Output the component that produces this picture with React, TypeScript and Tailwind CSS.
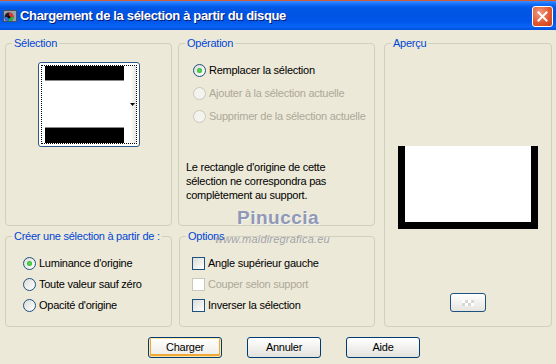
import React from "react";

function Radio({ label, checked, disabled }: { label: string; checked?: boolean; disabled?: boolean }) {
  return (
    <div className="flex h-[21px] items-center gap-[3px] whitespace-nowrap">
      <span
        className={
          disabled
            ? "flex h-[13px] w-[13px] shrink-0 items-center justify-center rounded-full border border-[#cac8bb] bg-[#f4f3ee]"
            : "flex h-[13px] w-[13px] shrink-0 items-center justify-center rounded-full border border-[#1c5180] bg-gradient-to-br from-[#dcdcd7] to-white"
        }
      >
        {checked && <span className="h-[5px] w-[5px] rounded-full bg-[radial-gradient(circle,#5be35b,#21a121)]" />}
      </span>
      <span className={disabled ? "text-[#aca899]" : "text-black"}>{label}</span>
    </div>
  );
}

function Check({ label, disabled }: { label: string; disabled?: boolean }) {
  return (
    <div className="flex h-[21px] items-center gap-[3px] whitespace-nowrap">
      <span
        className={
          disabled
            ? "h-[13px] w-[13px] shrink-0 border border-[#cac8bb] bg-white"
            : "h-[13px] w-[13px] shrink-0 border border-[#1c5180] bg-gradient-to-br from-[#dcdcd7] to-white"
        }
      />
      <span className={disabled ? "text-[#aca899]" : "text-black"}>{label}</span>
    </div>
  );
}

function Group({ title, className, children }: { title: string; className?: string; children?: React.ReactNode }) {
  return (
    <fieldset className={"min-w-0 rounded-[4px] border border-[#d0d0bf] " + (className ?? "")}>
      <legend className="ml-[6px] px-[2px] leading-[13px] text-[#0046d5]">{title}</legend>
      {children}
    </fieldset>
  );
}

function Btn({ label, main }: { label: string; main?: boolean }) {
  return (
    <button
      className={
        main
          ? "h-[21px] w-[74px] rounded-[3px] border border-[#003c74] bg-gradient-to-b from-white to-[#ecebe6] shadow-[inset_0_0_0_1px_#ffe7a2,inset_0_-1px_0_2px_#f0a73a]"
          : "h-[21px] w-[74px] rounded-[3px] border border-[#003c74] bg-gradient-to-b from-white to-[#e3e2dc]"
      }
    >
      {label}
    </button>
  );
}

export default function App() {
  return (
    <div className="relative h-[364px] w-[556px] overflow-hidden bg-[#ece9d8] font-['Liberation_Sans',Arial,sans-serif] text-[11px] tracking-[-0.25px] text-black">
      {/* title bar */}
      <div className="flex h-[30px] items-center border-t border-[#cf5b3b] bg-[linear-gradient(to_bottom,#3a8cff_0%,#1470fb_10%,#0058e6_22%,#0054e3_45%,#0057ea_70%,#0863f6_88%,#0050dc_100%)] pl-[2px] pr-[3px]">
        <svg width="16" height="16" viewBox="0 0 16 16" className="mt-[1px]">
          <rect x="1" y="2" width="14" height="12" rx="1" fill="#4a4f59" />
          <rect x="2" y="3" width="12" height="10" fill="#9aa3ad" />
          <circle cx="7" cy="9" r="4.5" fill="#1d1d25" />
          <path d="M7 4.5a4.5 4.5 0 0 1 4.5 4.5H7z" fill="#e6342c" />
          <path d="M11.5 9A4.5 4.5 0 0 1 7 13.5V9z" fill="#28b33e" />
          <path d="M7 13.5A4.5 4.5 0 0 1 2.5 9H7z" fill="#2f6de0" />
          <circle cx="7" cy="9" r="1.6" fill="#111" />
        </svg>
        <div className="ml-[2px] text-[13px] font-bold tracking-[-0.35px] text-white [text-shadow:1px_1px_0_#0a1c6c]">
          Chargement de la sélection à partir du disque
        </div>
        <div className="ml-auto mt-[2px] flex h-[21px] w-[21px] items-center justify-center rounded-[3px] border border-white bg-[radial-gradient(circle_at_35%_30%,#f29b80,#e0552c_60%,#c8421b)]">
          <svg width="11" height="11" viewBox="0 0 11 11">
            <path d="M1.5 1.5l8 8M9.5 1.5l-8 8" stroke="white" strokeWidth="2" strokeLinecap="square" />
          </svg>
        </div>
      </div>

      {/* body */}
      <div className="px-[5px] pt-[7px]">
        <div className="grid grid-cols-[167px_197px_171px] grid-rows-[189px_97px] gap-x-[6px] gap-y-[4px]">
          <Group title="Sélection" className="flex flex-col items-center">
            <div className="mt-[12px] h-[85px] w-[102px] rounded-[3px] border border-[#2b5a8a] bg-white p-[2px]">
              <div className="flex h-full border border-dotted border-black">
                <div className="ml-[3px] flex w-[79px] flex-col">
                  <div className="h-[15px] border-b border-[#8a8a8a] bg-black" />
                  <div className="flex-1" />
                  <div className="h-[16px] border-t border-[#8a8a8a] bg-black" />
                </div>
                <div className="flex flex-1 items-center justify-end bg-gradient-to-r from-white via-white to-[#e6e5e0] pr-[1px]">
                  <svg width="5" height="3" viewBox="0 0 5 3">
                    <path d="M0 0h5L2.5 3z" fill="#000" />
                  </svg>
                </div>
              </div>
            </div>
          </Group>

          <Group title="Opération">
            <div className="ml-[14px] mt-[10px] flex flex-col gap-[2px]">
              <Radio label="Remplacer la sélection" checked />
              <Radio label="Ajouter à la sélection actuelle" disabled />
              <Radio label="Supprimer de la sélection actuelle" disabled />
            </div>
            <p className="ml-[7px] mt-[33px] w-[172px] leading-[14px]">
              Le rectangle d'origine de cette sélection ne correspondra pas complètement au support.
            </p>
          </Group>

          <Group title="Aperçu" className="row-span-2 ml-[3px] flex flex-col items-center">
            <div className="mt-[96px] flex h-[83px] w-[140px] border-x-[7px] border-b-[7px] border-black bg-white" />
            <div className="mt-[64px] flex h-[19px] w-[36px] items-center justify-center rounded-[3px] border border-[#1c5180] bg-gradient-to-b from-white to-[#e6e5df]">
              <div className="grid grid-cols-4">
                <span className="h-[3px] w-[3px] bg-white" />
                <span className="h-[3px] w-[3px] bg-[#d8d8d8]" />
                <span className="h-[3px] w-[3px] bg-white" />
                <span className="h-[3px] w-[3px] bg-[#d8d8d8]" />
                <span className="h-[3px] w-[3px] bg-[#d8d8d8]" />
                <span className="h-[3px] w-[3px] bg-white" />
                <span className="h-[3px] w-[3px] bg-[#d8d8d8]" />
                <span className="h-[3px] w-[3px] bg-white" />
              </div>
            </div>
          </Group>

          <Group title="Créer une sélection à partir de :">
            <div className="ml-[17px] mt-[10px] flex flex-col">
              <Radio label="Luminance d'origine" checked />
              <Radio label="Toute valeur sauf zéro" />
              <Radio label="Opacité d'origine" />
            </div>
          </Group>

          <Group title="Options" className="ml-[1px]">
            <div className="ml-[12px] mt-[10px] flex flex-col">
              <Check label="Angle supérieur gauche" />
              <Check label="Couper selon support" disabled />
              <Check label="Inverser la sélection" />
            </div>
          </Group>
        </div>

        <div className="ml-[143px] mt-[10px] flex gap-[25px]">
          <Btn label="Charger" main />
          <Btn label="Annuler" />
          <Btn label="Aide" />
        </div>
      </div>

      {/* watermark */}
      <div className="pointer-events-none absolute left-[237px] top-[207px] text-[19px] font-bold leading-[22px] tracking-[0.5px] text-[#9098b6] [text-shadow:1px_1px_0_#f6f6f6]">
        Pinuccia
      </div>
      <div className="pointer-events-none absolute left-[215px] top-[231px] text-[11px] italic tracking-[0.2px] text-[#8d8f9f]/80">
        www.maidiregrafica.eu
      </div>
    </div>
  );
}
